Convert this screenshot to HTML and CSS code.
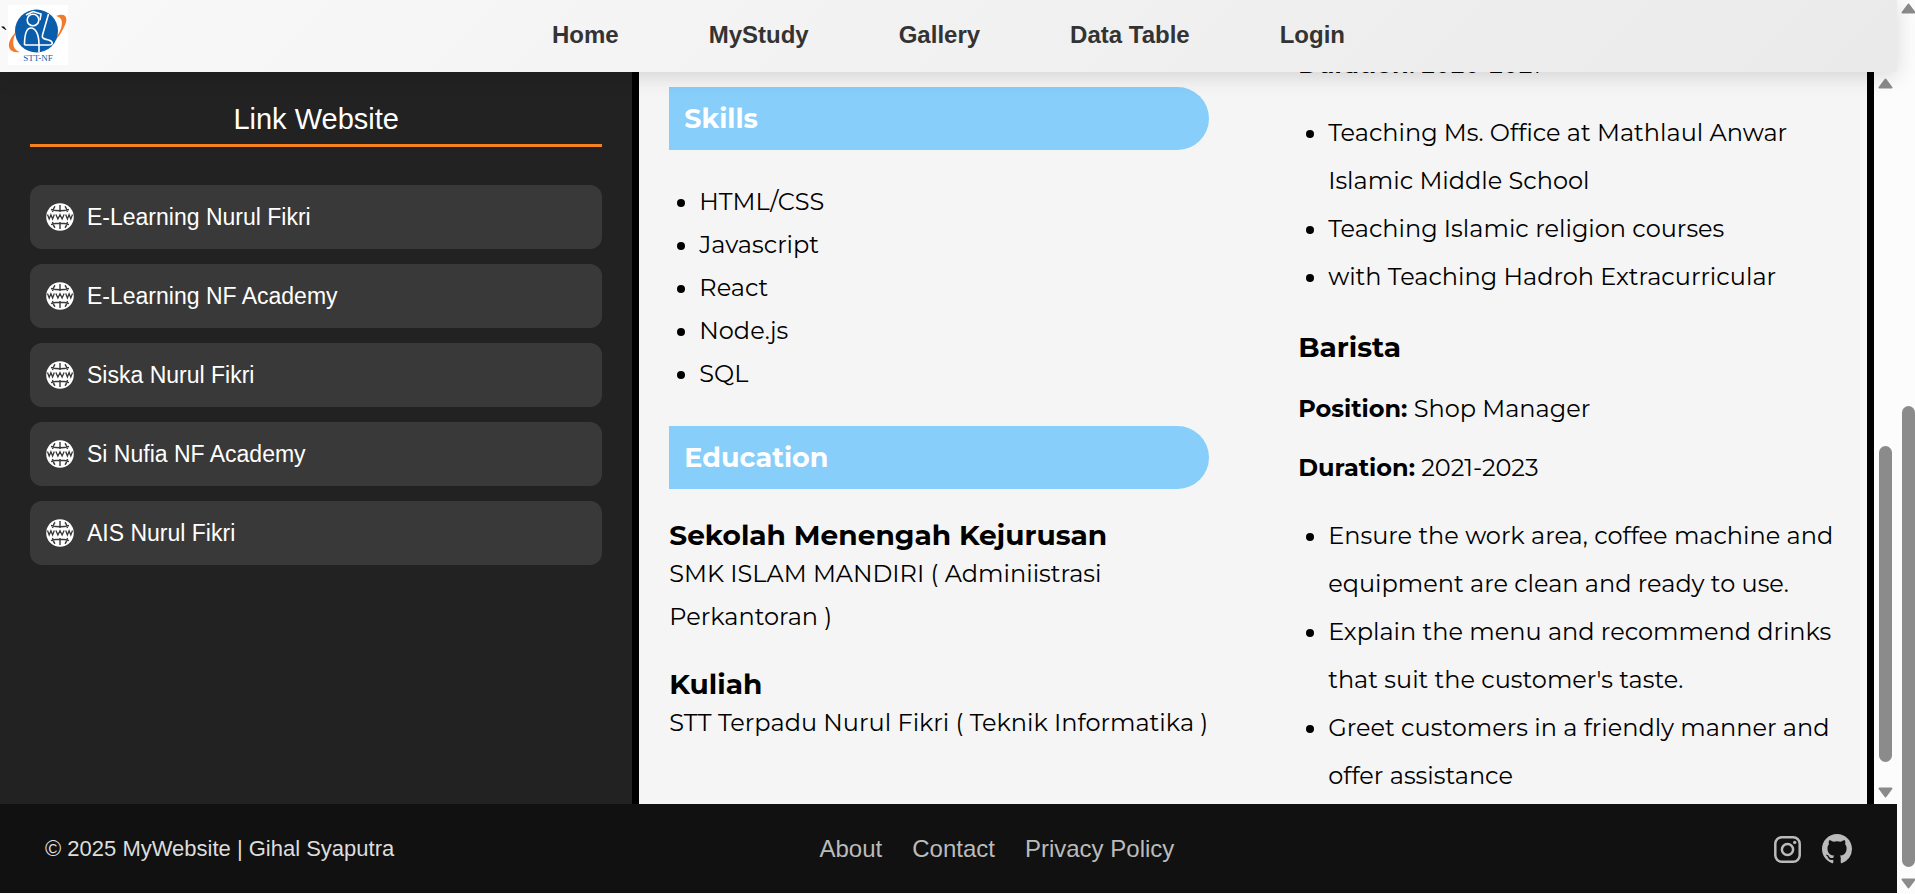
FILE: index.html
```html
<!DOCTYPE html>
<html lang="en">
<head>
<meta charset="utf-8">
<title>MyWebsite</title>
<link rel="stylesheet" href="styles.css">
</head>
<body>
<svg class="defs" aria-hidden="true">
  <symbol id="globe" viewBox="0 0 28 28">
    <circle cx="14" cy="14" r="13.800" fill="#fff"/>
    <g fill="none" stroke="#393939" stroke-width="1.400">
      <path d="M14 2v7M14 19v7M9 3.200C7.800 4.700 7 6.500 6.500 9M19 3.200C20.200 4.700 21 6.500 21.500 9M9 24.800C7.800 23.300 7 21.500 6.500 19M19 24.800C20.200 23.300 21 21.500 21.500 19M5 6.500q9 2.500 18 0M5 21.500q9-2.500 18 0"/>
      <path d="M1.500 11.500l1.700 4.500 1.700-4.200 1.700 4.200 1.700-4.500M9.900 11.500l2 4.500L14 11.800l2.100 4.200 2-4.500M19.700 11.500l1.700 4.500 1.700-4.200 1.700 4.200 1.700-4.500" stroke-width="1.300"/>
    </g>
  </symbol>
</svg>
<div class="page">
  <header class="header">
    <span class="tick">`</span>
    <svg class="logo" viewBox="0 0 60 60" role="img" aria-label="STT-NF">
      <rect width="60" height="60" fill="#fff"/>
      <path d="M8 27C-3 38-1 49 12 47C5 45 3 38 8 27zM48 11C58 7 61 13 56 22C53 29 49 34 46 36C54 25 58 13 48 11z" fill="#f37a2c"/>
      <circle cx="28.500" cy="26" r="21.500" fill="#0a5dab"/>
      <g fill="none" stroke="#fff" stroke-width="1.600">
        <circle cx="25" cy="15" r="5.800"/>
        <path d="M18 10l7-3.500 8 2.500-1 6M16.500 40c0-11 2-17 6.500-17s8 6 8 17v7M16.500 40h24c6 0 4-4 0-5-5-1-7-2-6-5l6-21"/>
      </g>
      <text x="30" y="56" text-anchor="middle" class="logo-text">STT-NF</text>
    </svg>
    <nav class="nav">
      <a href="#">Home</a><a href="#">MyStudy</a><a href="#">Gallery</a><a href="#">Data Table</a><a href="#">Login</a>
    </nav>
  </header>
  <div class="middle">
    <aside class="sidebar">
      <h2 class="side-title">Link Website</h2>
      <ul class="links">
        <li><a href="#"><svg class="globe"><use href="#globe"/></svg>E-Learning Nurul Fikri</a></li>
        <li><a href="#"><svg class="globe"><use href="#globe"/></svg>E-Learning NF Academy</a></li>
        <li><a href="#"><svg class="globe"><use href="#globe"/></svg>Siska Nurul Fikri</a></li>
        <li><a href="#"><svg class="globe"><use href="#globe"/></svg>Si Nufia NF Academy</a></li>
        <li><a href="#"><svg class="globe"><use href="#globe"/></svg>AIS Nurul Fikri</a></li>
      </ul>
    </aside>
    <main class="main">
      <section class="col">
        <h2 class="banner">Skills</h2>
        <ul class="skills">
          <li>HTML/CSS</li><li>Javascript</li><li>React</li><li>Node.js</li><li>SQL</li>
        </ul>
        <h2 class="banner">Education</h2>
        <div class="school">
          <h3>Sekolah Menengah Kejurusan</h3>
          <p>SMK ISLAM MANDIRI ( Adminiistrasi Perkantoran )</p>
        </div>
        <div class="school">
          <h3>Kuliah</h3>
          <p>STT Terpadu Nurul Fikri ( Teknik Informatika )</p>
        </div>
      </section>
      <section class="col jobs">
        <p><b>Duration:</b> 2020-2021</p>
        <ul>
          <li>Teaching Ms. Office at Mathlaul Anwar Islamic Middle School</li>
          <li>Teaching Islamic religion courses</li>
          <li>with Teaching Hadroh Extracurricular</li>
        </ul>
        <h3>Barista</h3>
        <p><b>Position:</b> Shop Manager</p>
        <p><b>Duration:</b> 2021-2023</p>
        <ul>
          <li>Ensure the work area, coffee machine and equipment are clean and ready to use.</li>
          <li>Explain the menu and recommend drinks that suit the customer's taste.</li>
          <li>Greet customers in a friendly manner and offer assistance</li>
        </ul>
      </section>
    </main>
    <div class="scrollbar inner">
      <svg class="arrow" viewBox="0 0 15 11"><path d="M7.500 1.500L13.500 9.500H1.500z"/></svg>
      <div class="track"><div class="thumb"></div></div>
      <svg class="arrow" viewBox="0 0 15 11"><path d="M7.500 9.500L13.500 1.500H1.500z"/></svg>
    </div>
  </div>
  <footer class="footer">
    <p class="copy">© 2025 MyWebsite | Gihal Syaputra</p>
    <nav class="foot-links"><a href="#">About</a><a href="#">Contact</a><a href="#">Privacy Policy</a></nav>
    <div class="social">
      <a href="#" aria-label="Instagram"><svg width="27" height="27" viewBox="0 0 27 27"><g fill="none" stroke="#bbb" stroke-width="2.500"><rect x="1.300" y="1.300" width="24.400" height="24.400" rx="6.500"/><circle cx="13.500" cy="13.500" r="5.600"/></g><circle cx="20.700" cy="6.400" r="1.700" fill="#bbb"/></svg></a>
      <a href="#" aria-label="GitHub"><svg width="30" height="30" viewBox="0 0 16 16"><path fill="#bbb" d="M8 0C3.580 0 0 3.580 0 8c0 3.540 2.290 6.530 5.470 7.590.4.070.55-.17.55-.38 0-.19-.01-.82-.01-1.490-2.010.37-2.530-.49-2.690-.94-.09-.23-.48-.94-.82-1.130-.28-.15-.68-.52-.01-.53.63-.01 1.080.58 1.230.82.72 1.210 1.870.87 2.330.66.070-.52.28-.87.51-1.070-1.780-.2-3.640-.89-3.640-3.950 0-.87.31-1.590.82-2.150-.08-.2-.36-1.020.08-2.120 0 0 .67-.21 2.200.82.64-.18 1.320-.27 2-.27s1.360.09 2 .27c1.530-1.040 2.200-.82 2.200-.82.44 1.100.16 1.920.08 2.120.51.56.82 1.270.82 2.150 0 3.070-1.870 3.750-3.650 3.950.29.25.54.73.54 1.480 0 1.070-.01 1.930-.01 2.200 0 .21.15.46.55.38A8.010 8.010 0 0 0 16 8c0-4.420-3.580-8-8-8z"/></svg></a>
    </div>
  </footer>
</div>
<div class="scrollbar outer">
  <svg class="arrow" viewBox="0 0 15 11"><path d="M7.500 1.500L13.500 9.500H1.500z"/></svg>
  <div class="track"><div class="thumb"></div></div>
  <svg class="arrow" viewBox="0 0 15 11"><path d="M7.500 9.500L13.500 1.500H1.500z"/></svg>
</div>
</body>
</html>
```

FILE: styles.css
```css
* { box-sizing: border-box; margin: 0; padding: 0; }

body {
  display: flex;
  height: 100vh;
  overflow: hidden;
  background: #fcfcfc;
  font-family: "Liberation Sans", Arial, sans-serif;
  font-size: 24px;
  color: #000;
}

a { color: inherit; text-decoration: none; }
ul { list-style: none; }
.defs { display: none; }

.page {
  flex: 1;
  min-width: 0;
  display: flex;
  flex-direction: column;
  padding-bottom: 1px;
}

/* Header */
.header {
  position: relative;
  z-index: 1;
  display: grid;
  grid-template-columns: 8px 60px 1fr 68px;
  align-items: center;
  padding: 5px 0 7px;
  background: linear-gradient(135deg, #f9f9f9, #eaeaea);
  box-shadow: 0 4px 20px rgba(0, 0, 0, 0.14);
}
.tick { font: 24px/24px "Liberation Serif", serif; }
.logo { width: 60px; height: 60px; }
.logo-text { font: 9px "Liberation Serif", serif; fill: #0a5dab; }
.nav {
  display: flex;
  justify-content: center;
  gap: 90px;
  font-weight: bold;
  line-height: 28px;
  color: #333;
}

/* Body */
.middle { flex: 1; min-height: 0; display: flex; }

.sidebar {
  width: 33.333%;
  padding: 30px;
  background: #222;
  color: #fff;
}
.side-title {
  padding-bottom: 8px;
  border-bottom: 3px solid #f58220;
  font-size: 29px;
  font-weight: normal;
  line-height: 34px;
  text-align: center;
}
.links {
  display: flex;
  flex-direction: column;
  gap: 15px;
  margin-top: 38px;
}
.links a {
  display: flex;
  align-items: center;
  gap: 13px;
  padding: 16px;
  border-radius: 12px;
  background: #393939;
  font-size: 23px;
  line-height: 32px;
}
.globe { width: 28px; height: 28px; }

.main {
  flex: 1;
  min-width: 0;
  display: grid;
  grid-template-columns: 1fr 1fr;
  gap: 89px;
  overflow: hidden;
  padding: 15px 29px 0 30px;
  border: solid #000;
  border-width: 0 7px;
  background: #f5f5f5;
  font-family: Montserrat, Inter, sans-serif;
  line-height: 43px;
}
.main ul { padding-left: 30px; list-style: disc; }
.main h3 { font-size: 28px; line-height: 34px; }
.banner {
  padding: 10px 15px;
  border-radius: 0 32px 32px 0;
  background: #87cefa;
  color: #fff;
  font-size: 27px;
}
.skills { margin: 30px 0 31px; }
.school { margin-top: 29px; }

.jobs { margin-top: -46px; line-height: 48px; }
.jobs p { margin-bottom: 11px; }
.jobs ul { margin-top: 20px; }
.jobs h3 { margin: 29px 0 21px; }

/* Footer */
.footer {
  display: grid;
  grid-template-columns: 8fr auto 7fr;
  align-items: center;
  padding: 30px 45px 29px;
  background: #111;
  color: #bbb;
  line-height: 30px;
}
.copy { font-size: 22px; color: #ddd; }
.foot-links { display: flex; gap: 30px; }
.social {
  display: flex;
  align-items: center;
  justify-content: flex-end;
  gap: 21px;
}
.social a, .social svg { display: block; }

/* Scrollbars */
.scrollbar {
  display: flex;
  flex-direction: column;
  background: #fcfcfc;
}
.inner { width: 23px; padding: 6px 4px; }
.outer { width: 18px; padding: 3px 0 5px 4px; overflow: hidden; }
.arrow {
  width: 15px;
  height: 11px;
  flex: none;
  fill: #8b8b8b;
  stroke: #8b8b8b;
  stroke-width: 2;
  stroke-linejoin: round;
}
.track {
  flex: 1;
  display: flex;
  flex-direction: column;
  justify-content: flex-end;
  padding: 0 1px;
}
.thumb { width: 13px; border-radius: 7px; background: #8b8b8b; }
.inner .track { padding-bottom: 25px; }
.inner .thumb { height: 47%; }
.outer .track { padding-bottom: 11px; }
.outer .thumb { height: 54%; }
```
